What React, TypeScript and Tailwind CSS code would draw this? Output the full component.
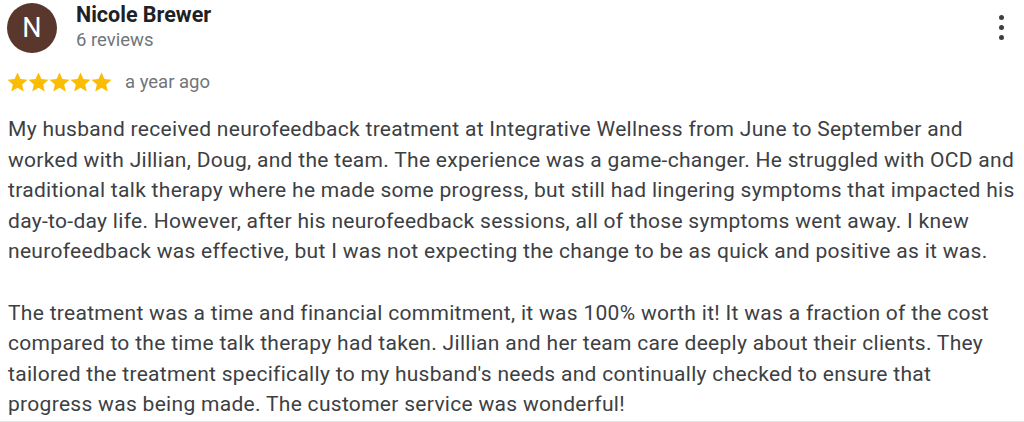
import React from "react";

const lines1 = [
  "My husband received neurofeedback treatment at Integrative Wellness from June to September and",
  "worked with Jillian, Doug, and the team. The experience was a game-changer. He struggled with OCD and",
  "traditional talk therapy where he made some progress, but still had lingering symptoms that impacted his",
  "day-to-day life. However, after his neurofeedback sessions, all of those symptoms went away. I knew",
  "neurofeedback was effective, but I was not expecting the change to be as quick and positive as it was.",
];
const lines2 = [
  "The treatment was a time and financial commitment, it was 100% worth it! It was a fraction of the cost",
  "compared to the time talk therapy had taken. Jillian and her team care deeply about their clients. They",
  "tailored the treatment specifically to my husband's needs and continually checked to ensure that",
  "progress was being made. The customer service was wonderful!",
];

function Star() {
  return (
    <svg width="21" height="21" viewBox="1 1 22 22" className="block">
      <path
        fill="#fbbc04"
        d="M12 1.5l3.09 6.96 7.41.64-5.62 4.93 1.68 7.47L12 17.6l-6.56 3.9 1.68-7.47L1.5 9.1l7.41-.64z"
      />
    </svg>
  );
}

export default function App() {
  return (
    <div
      className="w-[1024px] h-[422px] bg-white overflow-hidden border-b border-[#e5e5e5] relative"
      style={{ fontFamily: "Roboto, 'Liberation Sans', sans-serif" }}
    >
      <div className="flex items-start pl-[7px] pt-[3px] pr-[16px]">
        <div className="w-[50px] h-[50px] rounded-full bg-[#5a372d] flex items-center justify-center text-white text-[27px] leading-none">
          N
        </div>
        <div className="ml-[19px] flex-1">
          <div className="text-[21.5px] font-bold text-[#202124] leading-[26px] -mt-[1px]">Nicole Brewer</div>
          <div className="text-[18.5px] text-[#70757a] leading-[22px] mt-[1px]">6 reviews</div>
        </div>
        <div className="flex flex-col items-center gap-[5px] mt-[12px] mr-[4px]">
          <span className="w-[5px] h-[5px] rounded-full bg-[#3c4043]" />
          <span className="w-[5px] h-[5px] rounded-full bg-[#3c4043]" />
          <span className="w-[5px] h-[5px] rounded-full bg-[#3c4043]" />
        </div>
      </div>
      <div className="flex items-center pl-[7px] mt-[18px]">
        <div className="flex">
          <Star />
          <Star />
          <Star />
          <Star />
          <Star />
        </div>
        <span className="ml-[13px] text-[18.5px] text-[#70757a] leading-[22px]">a year ago</span>
      </div>
      <div className="pl-[8px] mt-[21px] text-[21px] tracking-[0.3px] leading-[30.6px] text-[#3c4043] whitespace-nowrap">
        {lines1.map((l) => (
          <div key={l}>{l}</div>
        ))}
        <div className="h-[30.6px]" />
        {lines2.map((l) => (
          <div key={l}>{l}</div>
        ))}
      </div>
    </div>
  );
}
